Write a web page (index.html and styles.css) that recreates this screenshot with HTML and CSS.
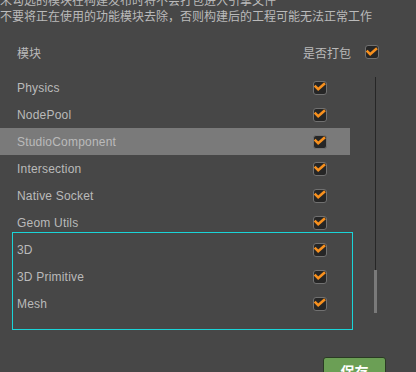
FILE: index.html
```html
<!DOCTYPE html>
<html>
<head>
<meta charset="utf-8">
<link rel="stylesheet" href="styles.css">
</head>
<body>
<div class="page">
  <div class="notice">
    <div class="line">未勾选的模块在构建发布时将不会打包进入引擎文件</div>
    <div class="line">不要将正在使用的功能模块去除，否则构建后的工程可能无法正常工作</div>
  </div>
  <div class="header">
    <span class="h-title">模块</span>
    <span class="h-right"><span class="h-label">是否打包</span><span class="cb"><svg viewBox="0 0 14 14"><polyline points="2.6,6.6 5.2,9.2 11,4.2"/></svg></span></span>
  </div>
  <div class="main">
    <div class="list">
      <div class="row"><span>Physics</span><span class="cb"><svg viewBox="0 0 14 14"><polyline points="2.6,6.6 5.2,9.2 11,4.2"/></svg></span></div>
      <div class="row"><span>NodePool</span><span class="cb"><svg viewBox="0 0 14 14"><polyline points="2.6,6.6 5.2,9.2 11,4.2"/></svg></span></div>
      <div class="row active"><span>StudioComponent</span><span class="cb"><svg viewBox="0 0 14 14"><polyline points="2.6,6.6 5.2,9.2 11,4.2"/></svg></span></div>
      <div class="row"><span>Intersection</span><span class="cb"><svg viewBox="0 0 14 14"><polyline points="2.6,6.6 5.2,9.2 11,4.2"/></svg></span></div>
      <div class="row"><span>Native Socket</span><span class="cb"><svg viewBox="0 0 14 14"><polyline points="2.6,6.6 5.2,9.2 11,4.2"/></svg></span></div>
      <div class="row"><span>Geom Utils</span><span class="cb"><svg viewBox="0 0 14 14"><polyline points="2.6,6.6 5.2,9.2 11,4.2"/></svg></span></div>
      <div class="row"><span>3D</span><span class="cb"><svg viewBox="0 0 14 14"><polyline points="2.6,6.6 5.2,9.2 11,4.2"/></svg></span></div>
      <div class="row"><span>3D Primitive</span><span class="cb"><svg viewBox="0 0 14 14"><polyline points="2.6,6.6 5.2,9.2 11,4.2"/></svg></span></div>
      <div class="row"><span>Mesh</span><span class="cb"><svg viewBox="0 0 14 14"><polyline points="2.6,6.6 5.2,9.2 11,4.2"/></svg></span></div>
      <div class="highlight-box"></div>
    </div>
    <div class="scroll">
      <div class="track"></div>
      <div class="thumb"></div>
    </div>
  </div>
  <div class="footer">
    <button class="save">保存</button>
  </div>
</div>
</body>
</html>
```

FILE: styles.css
```css
html, body {
  margin: 0;
  padding: 0;
  background: #474747;
  overflow: hidden;
}
.page {
  width: 416px;
  height: 372px;
  font-family: "Liberation Sans", "Noto Sans CJK SC", sans-serif;
  font-size: 12px;
  color: #bababa;
  overflow: hidden;
}
.notice {
  margin-top: -8px;
  font-family: "Noto Sans CJK SC", sans-serif;
}
.notice .line {
  height: 16px;
  line-height: 16px;
  white-space: nowrap;
}
.header {
  margin-top: 14px;
  height: 28px;
  display: flex;
  align-items: center;
  justify-content: space-between;
  padding: 0 37px 0 17px;
  font-family: "Noto Sans CJK SC", sans-serif;
}
.h-right {
  display: flex;
  align-items: center;
  gap: 14px;
}
.cb {
  width: 14px;
  height: 14px;
  box-sizing: border-box;
  border: 1.5px solid #707070;
  border-radius: 3px;
  background: #262626;
  display: block;
  flex: none;
}
.cb svg {
  display: block;
  width: 14px;
  height: 14px;
  margin: -1.5px 0 0 -1.5px;
}
.cb polyline {
  fill: none;
  stroke: #f7901e;
  stroke-width: 2.6;
  stroke-linecap: square;
}
.main {
  margin-top: 8px;
  display: flex;
}
.list {
  position: relative;
  width: 350px;
}
.row {
  height: 27px;
  display: flex;
  align-items: center;
  justify-content: space-between;
  padding: 0 23px 0 17px;
  letter-spacing: 0.2px;
}
.row.active {
  background: #7a7a7a;
}
.highlight-box {
  position: absolute;
  left: 12px;
  top: 158px;
  width: 341px;
  height: 98px;
  box-sizing: border-box;
  border: 1px solid #1ad4d8;
  pointer-events: none;
}
.scroll {
  margin-left: 24px;
  width: 3px;
  display: flex;
  flex-direction: column;
  align-items: center;
  padding-top: 3px;
}
.track {
  width: 1px;
  height: 193px;
  background: #262626;
}
.thumb {
  width: 3px;
  height: 43px;
  background: #7a7a7a;
}
.footer {
  display: flex;
  justify-content: flex-end;
  padding-right: 30px;
  margin-top: 40px;
}
.save {
  width: 63px;
  height: 28px;
  box-sizing: border-box;
  background: #6b9f55;
  border: 1px solid #2a3a24;
  border-radius: 3px;
  color: #fff;
  font-family: "Noto Sans CJK SC", sans-serif;
  font-weight: bold;
  font-size: 14px;
  padding: 0;
}
```
